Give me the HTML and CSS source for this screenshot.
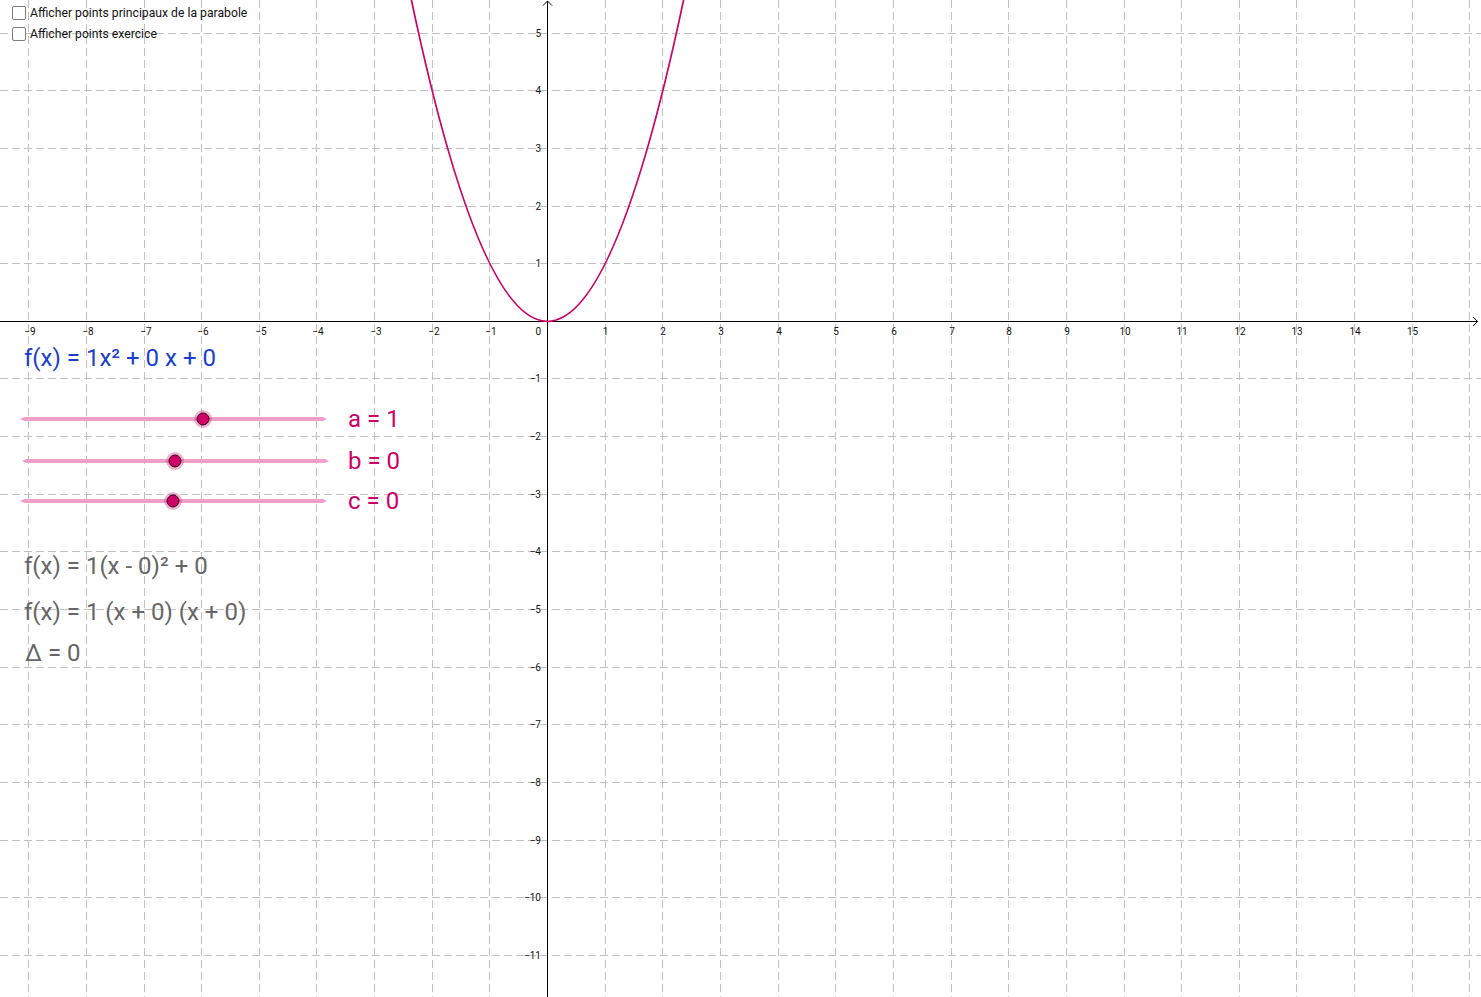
FILE: index.html
```html
<!DOCTYPE html>
<html lang="fr">
<head>
<meta charset="utf-8">
<title>Parabole</title>
<link rel="stylesheet" href="styles.css">
</head>
<body>
<div class="stage">
  <svg class="graph" width="1481" height="997" viewBox="0 0 1481 997" xmlns="http://www.w3.org/2000/svg">
    <g class="grid">
      <line x1="28.5" y1="0" x2="28.5" y2="997"/>
      <line x1="86.5" y1="0" x2="86.5" y2="997"/>
      <line x1="144.5" y1="0" x2="144.5" y2="997"/>
      <line x1="201.5" y1="0" x2="201.5" y2="997"/>
      <line x1="259.5" y1="0" x2="259.5" y2="997"/>
      <line x1="316.5" y1="0" x2="316.5" y2="997"/>
      <line x1="374.5" y1="0" x2="374.5" y2="997"/>
      <line x1="432.5" y1="0" x2="432.5" y2="997"/>
      <line x1="489.5" y1="0" x2="489.5" y2="997"/>
      <line x1="605.5" y1="0" x2="605.5" y2="997"/>
      <line x1="662.5" y1="0" x2="662.5" y2="997"/>
      <line x1="720.5" y1="0" x2="720.5" y2="997"/>
      <line x1="778.5" y1="0" x2="778.5" y2="997"/>
      <line x1="835.5" y1="0" x2="835.5" y2="997"/>
      <line x1="893.5" y1="0" x2="893.5" y2="997"/>
      <line x1="951.5" y1="0" x2="951.5" y2="997"/>
      <line x1="1008.5" y1="0" x2="1008.5" y2="997"/>
      <line x1="1066.5" y1="0" x2="1066.5" y2="997"/>
      <line x1="1124.5" y1="0" x2="1124.5" y2="997"/>
      <line x1="1181.5" y1="0" x2="1181.5" y2="997"/>
      <line x1="1239.5" y1="0" x2="1239.5" y2="997"/>
      <line x1="1296.5" y1="0" x2="1296.5" y2="997"/>
      <line x1="1354.5" y1="0" x2="1354.5" y2="997"/>
      <line x1="1412.5" y1="0" x2="1412.5" y2="997"/>
      <line x1="1469.5" y1="0" x2="1469.5" y2="997"/>

      <line x1="0" y1="33.5" x2="1481" y2="33.5"/>
      <line x1="0" y1="90.5" x2="1481" y2="90.5"/>
      <line x1="0" y1="148.5" x2="1481" y2="148.5"/>
      <line x1="0" y1="206.5" x2="1481" y2="206.5"/>
      <line x1="0" y1="263.5" x2="1481" y2="263.5"/>
      <line x1="0" y1="378.5" x2="1481" y2="378.5"/>
      <line x1="0" y1="436.5" x2="1481" y2="436.5"/>
      <line x1="0" y1="494.5" x2="1481" y2="494.5"/>
      <line x1="0" y1="551.5" x2="1481" y2="551.5"/>
      <line x1="0" y1="609.5" x2="1481" y2="609.5"/>
      <line x1="0" y1="667.5" x2="1481" y2="667.5"/>
      <line x1="0" y1="724.5" x2="1481" y2="724.5"/>
      <line x1="0" y1="782.5" x2="1481" y2="782.5"/>
      <line x1="0" y1="840.5" x2="1481" y2="840.5"/>
      <line x1="0" y1="897.5" x2="1481" y2="897.5"/>
      <line x1="0" y1="955.5" x2="1481" y2="955.5"/>
    </g>

    <g class="axes">
      <line x1="0" y1="321.5" x2="1478" y2="321.5"/>
      <line x1="547.5" y1="1" x2="547.5" y2="997"/>
      <polyline class="arrow" points="1473,317 1477.5,321.5 1473,326"/>
      <polyline class="arrow" points="543,5.5 547.5,1 552,5.5"/>
    </g>

    <g class="xlabels">
      <text x="30">−9</text>
      <text x="88">−8</text>
      <text x="146">−7</text>
      <text x="203">−6</text>
      <text x="261">−5</text>
      <text x="318">−4</text>
      <text x="376">−3</text>
      <text x="434">−2</text>
      <text x="491">−1</text>
      <text x="605.5">1</text>
      <text x="663">2</text>
      <text x="721">3</text>
      <text x="779">4</text>
      <text x="836">5</text>
      <text x="894">6</text>
      <text x="952">7</text>
      <text x="1009">8</text>
      <text x="1067">9</text>
      <text x="1125">10</text>
      <text x="1182">11</text>
      <text x="1240">12</text>
      <text x="1297">13</text>
      <text x="1355">14</text>
      <text x="1412.5">15</text>
    </g>

    <g class="ylabels">
      <text x="541" y="335">0</text>
      <text x="541" y="37">5</text>
      <text x="541" y="94">4</text>
      <text x="541" y="152">3</text>
      <text x="541" y="210">2</text>
      <text x="541" y="267">1</text>
      <text x="541" y="382">−1</text>
      <text x="541" y="440">−2</text>
      <text x="541" y="498">−3</text>
      <text x="541" y="555">−4</text>
      <text x="541" y="613">−5</text>
      <text x="541" y="671">−6</text>
      <text x="541" y="728">−7</text>
      <text x="541" y="786">−8</text>
      <text x="541" y="844">−9</text>
      <text x="541" y="901">−10</text>
      <text x="541" y="959">−11</text>
    </g>

    <path class="curve" d="M409.14,-10.76 Q547.5,653.36 685.86,-10.76"/>
  </svg>

  <div class="checks">
    <label class="check"><span class="box"></span><span class="check-text">Afficher points principaux de la parabole</span></label>
    <label class="check"><span class="box"></span><span class="check-text">Afficher points exercice</span></label>
  </div>

  <div class="panel">
    <div class="row formula">f(x) = 1x² + 0 x + 0</div>

    <div class="row slider slider-a">
      <svg class="track" width="312" height="24" viewBox="0 0 312 24">
        <path class="bar" d="M0,12 L4,10 L303,10 L307,12 L303,14 L4,14 Z"/>
        <circle class="halo" cx="183" cy="12" r="9"/>
        <circle class="knob" cx="183" cy="12" r="6"/>
      </svg>
      <span class="slider-label">a = 1</span>
    </div>

    <div class="row slider slider-b">
      <svg class="track" width="312" height="24" viewBox="0 0 312 24">
        <path class="bar" d="M2,12 L6,10 L305,10 L309,12 L305,14 L6,14 Z"/>
        <circle class="halo" cx="155" cy="12" r="9"/>
        <circle class="knob" cx="155" cy="12" r="6"/>
      </svg>
      <span class="slider-label">b = 0</span>
    </div>

    <div class="row slider slider-c">
      <svg class="track" width="312" height="24" viewBox="0 0 312 24">
        <path class="bar" d="M0,12 L4,10 L303,10 L307,12 L303,14 L4,14 Z"/>
        <circle class="halo" cx="153" cy="12" r="9"/>
        <circle class="knob" cx="153" cy="12" r="6"/>
      </svg>
      <span class="slider-label">c = 0</span>
    </div>

    <div class="row gray canon">f(x) = 1(x - 0)² + 0</div>
    <div class="row gray factor">f(x) = 1 (x + 0) (x + 0)</div>
    <div class="row gray delta">Δ = 0</div>
  </div>
</div>
</body>
</html>
```

FILE: styles.css
```css
html, body {
  margin: 0;
  padding: 0;
  background: #ffffff;
}

body {
  font-family: Roboto, "Liberation Sans", sans-serif;
}

.stage {
  position: relative;
  width: 1481px;
  height: 997px;
  overflow: hidden;
  background: #ffffff;
}

.graph {
  position: absolute;
  left: 0;
  top: 0;
  display: block;
}

.grid line {
  stroke: #c0c0c0;
  stroke-width: 1;
  stroke-dasharray: 8 4;
  shape-rendering: crispEdges;
}

.axes line {
  stroke: #000000;
  stroke-width: 1;
  shape-rendering: crispEdges;
}

.axes .arrow {
  fill: none;
  stroke: #000000;
  stroke-width: 1;
}

.xlabels text,
.ylabels text {
  font-family: Roboto, "Liberation Sans", sans-serif;
  font-size: 10px;
  fill: #111111;
}

.xlabels text {
  text-anchor: middle;
  transform: translateY(335px);
}

.ylabels text {
  text-anchor: end;
}

.curve {
  fill: none;
  stroke: #cc0066;
  stroke-width: 1.7;
}

/* checkboxes */
.checks {
  position: absolute;
  left: 12px;
  top: 2px;
  display: flex;
  flex-direction: column;
}

.check {
  display: flex;
  align-items: center;
  height: 21px;
}

.box {
  box-sizing: border-box;
  width: 14px;
  height: 14px;
  border: 1px solid #7d7d7d;
  border-radius: 2px;
  background: #ffffff;
  margin-right: 4px;
}

.check-text {
  font-size: 12.2px;
  line-height: 14px;
  color: #111111;
}

/* left panel */
.panel {
  position: absolute;
  left: 0;
  top: 346px;
  display: flex;
  flex-direction: column;
}

.row {
  font-size: 24px;
  line-height: 24px;
  height: 24px;
  white-space: nowrap;
}

.formula {
  padding-left: 24px;
  color: #1a3fcc;
}

.slider {
  display: flex;
  align-items: center;
  padding-left: 20px;
}

.slider-a { margin-top: 37px; }
.slider-b { margin-top: 18px; }
.slider-c { margin-top: 16px; }

.track {
  display: block;
  flex: none;
}

.bar {
  fill: #eea0c8;
}

.halo {
  fill: rgba(214, 40, 120, 0.35);
}

.knob {
  fill: #cc0066;
  stroke: #2a0a18;
  stroke-width: 1;
}

.slider-label {
  margin-left: 16px;
  color: #cc0066;
  line-height: 24px;
}

.gray {
  padding-left: 24px;
  color: #666666;
}

.canon { margin-top: 41px; }
.factor { margin-top: 22px; }
.delta { margin-top: 17px; padding-left: 25px; }
```
